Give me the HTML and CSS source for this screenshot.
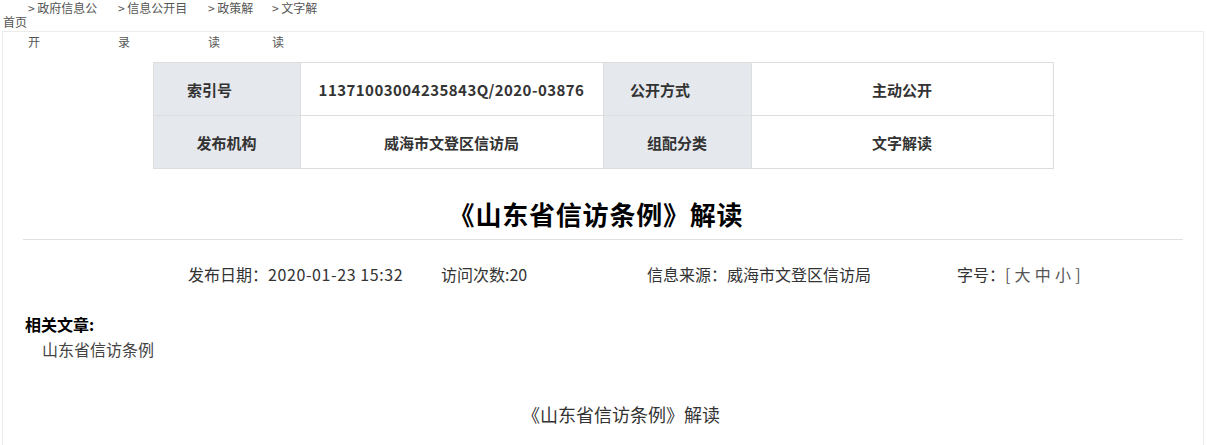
FILE: index.html
```html
<!DOCTYPE html>
<html lang="zh-CN">
<head>
<meta charset="utf-8">
<title>《山东省信访条例》解读</title>
<link rel="stylesheet" href="styles.css">
</head>
<body>
<div class="crumbs">
  <a class="home">首页</a>
  <a class="crumb wide">&gt;&nbsp;政府信息公开</a>
  <a class="crumb wide">&gt;&nbsp;信息公开目录</a>
  <a class="crumb narrow">&gt;&nbsp;政策解读</a>
  <a class="crumb narrow">&gt;&nbsp;文字解读</a>
</div>
<div class="box">
  <table class="info">
    <colgroup>
      <col class="c1">
      <col class="c2">
      <col class="c3">
      <col class="c4">
    </colgroup>
    <tr class="first">
      <th>索引号</th>
      <td class="code">11371003004235843Q/2020-03876</td>
      <th>公开方式</th>
      <td>主动公开</td>
    </tr>
    <tr>
      <th>发布机构</th>
      <td>威海市文登区信访局</td>
      <th>组配分类</th>
      <td>文字解读</td>
    </tr>
  </table>
  <h1 class="title">《山东省信访条例》解读</h1>
  <div class="meta">
    <span class="m1">发布日期：<span class="date">2020-01-23 15:32</span></span>
    <span class="m2">访问次数:20</span>
    <span class="m3">信息来源：威海市文登区信访局</span>
    <span class="m4">字号：<span class="sizes">[ 大 中 小 ]</span></span>
  </div>
  <div class="related">
    <div class="related-title">相关文章:</div>
    <div class="related-item">山东省信访条例</div>
  </div>
  <p class="body-text">《山东省信访条例》解读</p>
</div>
</body>
</html>
```
FILE: styles.css
```css
html, body {
  margin: 0;
  padding: 0;
  background: #fff;
}
body {
  font-family: "Noto Sans CJK SC", "Microsoft YaHei", sans-serif;
  color: #333;
}
.crumbs {
  display: flex;
  align-items: flex-start;
  height: 31px;
  padding-left: 3px;
  font-size: 12px;
  color: #555;
}
.crumbs a {
  color: #555;
  text-decoration: none;
}
.home {
  width: 25px;
  padding-top: 14px;
  line-height: 16px;
}
.crumb {
  line-height: 34px;
  margin-top: -9px;
  word-break: break-all;
}
.crumb.wide { width: 74px; margin-right: 16px; }
.crumb.narrow { width: 50px; margin-right: 14px; }

.box {
  margin-left: 2px;
  width: 1202px;
  box-sizing: border-box;
  border: 1px solid #ececec;
  padding: 0 20px 40px;
  min-height: 430px;
}
.info {
  margin: 30px auto 0;
  border-collapse: collapse;
  table-layout: fixed;
  width: 900px;
  font-size: 15px;
  font-weight: 700;
  color: #333;
}
.info .c1 { width: 147px; }
.info .c2 { width: 303px; }
.info .c3 { width: 148px; }
.info .c4 { width: 302px; }
.info th, .info td {
  border: 1px solid #dddddd;
  height: 52px;
  padding: 0;
  text-align: center;
  white-space: nowrap;
}
.info th {
  background: #e5e8ed;
}
.info .first th { padding-right: 34px; }
.code { letter-spacing: 0.45px; }

.title {
  margin: 25px 0 0;
  font-size: 26px;
  line-height: 40px;
  font-weight: 700;
  letter-spacing: 0.8px;
  color: #000;
  text-align: center;
  padding: 0 14px 5px 0;
  border-bottom: 1px solid #e0e0e0;
}
.meta {
  display: flex;
  margin-top: 22px;
  padding-left: 165px;
  font-size: 16px;
  line-height: 24px;
  color: #333;
}
.date { letter-spacing: 0.6px; }
.m1 { width: 253px; }
.m2 { width: 206px; }
.m3 { width: 310px; }
.sizes { color: #555; letter-spacing: 0.3px; }

.related {
  margin-top: 26px;
  font-size: 16px;
  line-height: 25px;
}
.related-title {
  font-weight: 700;
  color: #000;
  padding-left: 2px;
}
.related-item {
  padding-left: 19px;
  color: #444;
}
.body-text {
  margin: 37px 0 0;
  font-size: 18px;
  line-height: 30px;
  text-align: center;
  text-indent: 2em;
  color: #333;
}
```
